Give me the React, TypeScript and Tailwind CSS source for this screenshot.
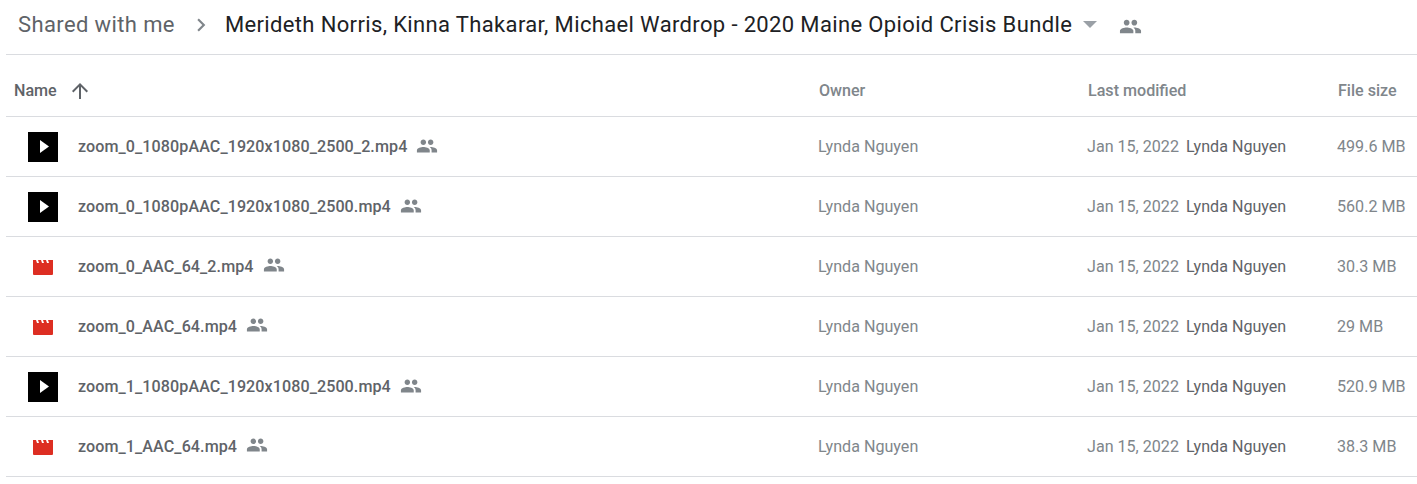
const files = [
  { name: 'zoom_0_1080pAAC_1920x1080_2500_2.mp4', size: '499.6 MB', kind: 'play' },
  { name: 'zoom_0_1080pAAC_1920x1080_2500.mp4', size: '560.2 MB', kind: 'play' },
  { name: 'zoom_0_AAC_64_2.mp4', size: '30.3 MB', kind: 'clip' },
  { name: 'zoom_0_AAC_64.mp4', size: '29 MB', kind: 'clip' },
  { name: 'zoom_1_1080pAAC_1920x1080_2500.mp4', size: '520.9 MB', kind: 'play' },
  { name: 'zoom_1_AAC_64.mp4', size: '38.3 MB', kind: 'clip' },
];

const SharedIcon = ({ className }: { className: string }) => (
  <svg viewBox="0 0 24 24" className={className} fill="currentColor">
    <path d="M16 11c1.66 0 2.99-1.34 2.99-3S17.66 5 16 5s-3 1.34-3 3 1.34 3 3 3zm-8 0c1.66 0 2.99-1.34 2.99-3S9.66 5 8 5 5 6.34 5 8s1.34 3 3 3zm0 2c-2.33 0-7 1.17-7 3.5V19h14v-2.5c0-2.33-4.67-3.5-7-3.5zm8 0c-.29 0-.62.02-.97.05 1.16.84 1.97 1.97 1.97 3.45V19h6v-2.5c0-2.33-4.67-3.5-7-3.5z" />
  </svg>
);

const PlayThumb = () => (
  <div className="w-[30px] h-[30px] bg-black flex items-center justify-center">
    <svg viewBox="0 0 9 13" className="w-[9px] h-[13px] ml-[3px]" fill="#fff">
      <path d="M0 0l9 6.5-9 6.5z" />
    </svg>
  </div>
);

const ClipIcon = () => (
  <svg viewBox="0 0 20 16" className="w-[20px] h-[16px] mt-[2px]" fill="#dd2e22">
    <path d="M0 1h3l1 3h2L5 1h3l1 3h2l-1-3h3l1 3h2l-1-3h5V15a1 1 0 0 1-1 1H1a1 1 0 0 1-1-1z" />
  </svg>
);

export default function App() {
  return (
    <div className="w-[1417px] h-[484px] bg-white overflow-hidden font-['Roboto',sans-serif]">
      <div className="ml-[6px] h-[55px] border-b border-[#dadce0] flex items-center pl-[12px] pb-[5px]">
        <span className="text-[22px] leading-[28px] text-[#5f6368] tracking-[0.38px]">Shared with me</span>
        <svg viewBox="0 0 24 24" className="w-[26px] h-[26px] ml-[13px] text-[#80868b]" fill="currentColor">
          <path d="M8.6 16.6L13.2 12 8.6 7.4 10 6l6 6-6 6z" />
        </svg>
        <span className="ml-[11px] text-[22px] leading-[28px] tracking-[0.36px] text-[#202124] whitespace-nowrap">
          Merideth Norris, Kinna Thakarar, Michael Wardrop - 2020 Maine Opioid Crisis Bundle
        </span>
        <svg viewBox="0 0 12 6" className="w-[14px] h-[7px] ml-[11px] text-[#9aa0a6]" fill="currentColor">
          <path d="M0 0h12L6 6z" />
        </svg>
        <SharedIcon className="w-[23px] h-[23px] ml-[22px] mt-[3px] text-[#80868b]" />
      </div>

      <div className="ml-[6px] h-[62px] pt-[12px] border-b border-[#dadce0] grid grid-cols-[812px_269px_250px_1fr] items-center text-[16.1px] font-medium text-[#80868b]">
        <div className="flex items-center pl-[8px]">
          <span className="text-[#5f6368]">Name</span>
          <svg viewBox="0 0 24 24" className="w-[24px] h-[24px] ml-[11px] text-[#5f6368]" fill="currentColor">
            <path d="M4 12l1.41 1.41L11 7.83V20h2V7.83l5.58 5.59L20 12l-8-8-8 8z" />
          </svg>
        </div>
        <div className="pl-[1px]">Owner</div>
        <div className="pl-[1px]">Last modified</div>
        <div className="pl-[1px]">File size</div>
      </div>

      {files.map((f) => (
        <div
          key={f.name}
          className="ml-[6px] h-[60px] border-b border-[#dadce0] grid grid-cols-[812px_269px_250px_1fr] items-center text-[16.1px] text-[#80868b]"
        >
          <div className="flex items-center">
            <div className="w-[72px] pl-[22px] flex items-center">
              {f.kind === 'play' ? <PlayThumb /> : <div className="pl-[5px] flex"><ClipIcon /></div>}
            </div>
            <span className="pt-[2px] font-medium text-[#5f6368] tracking-[0.08px]">{f.name}</span>
            <SharedIcon className="w-[22px] h-[22px] ml-[9px] -mt-[2px] text-[#80868b]" />
          </div>
          <div className="pt-[2px]">Lynda Nguyen</div>
          <div className="flex pt-[2px]">
            <span>Jan 15, 2022</span>
            <span className="ml-[7px] text-[#5f6368]">Lynda Nguyen</span>
          </div>
          <div className="pt-[2px]">{f.size}</div>
        </div>
      ))}
    </div>
  );
}
